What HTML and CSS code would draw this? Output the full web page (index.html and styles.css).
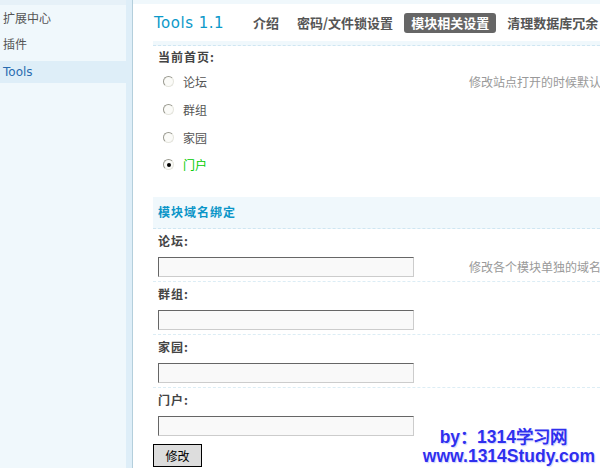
FILE: index.html
```html
<!DOCTYPE html>
<html lang="zh-CN">
<head>
<meta charset="utf-8">
<title>Tools 1.1</title>
<link rel="stylesheet" href="styles.css">
</head>
<body>
<div class="page">
  <aside class="sidebar">
    <div class="side-top"></div>
    <ul class="side-menu">
      <li class="side-item">扩展中心</li>
      <li class="side-item">插件</li>
      <li class="side-item side-item-active">Tools</li>
    </ul>
  </aside>
  <div class="side-edge"></div>
  <main class="content">
    <div class="content-top"></div>
    <header class="header">
      <h1 class="title">Tools 1.1</h1>
      <nav class="nav">
        <span class="nav-item">介绍</span>
        <span class="nav-item">密码/文件锁设置</span>
        <span class="nav-item nav-item-active">模块相关设置</span>
        <span class="nav-item">清理数据库冗余</span>
      </nav>
    </header>
    <div class="band"></div>

    <div class="form">
      <div class="label-row">当前首页:</div>
      <div class="radio-block">
        <div class="radio-list">
          <label class="radio-row"><input type="radio" name="home" class="radio"><span>论坛</span></label>
          <label class="radio-row"><input type="radio" name="home" class="radio"><span>群组</span></label>
          <label class="radio-row"><input type="radio" name="home" class="radio"><span>家园</span></label>
          <label class="radio-row"><input type="radio" name="home" class="radio" checked><span class="green">门户</span></label>
        </div>
        <div class="hint hint-radio">修改站点打开的时候默认首页</div>
      </div>

      <div class="section-head">模块域名绑定</div>

      <div class="group">
        <div class="label-row">论坛:</div>
        <div class="input-row">
          <input type="text" class="text-input">
          <span class="hint">修改各个模块单独的域名</span>
        </div>
      </div>
      <div class="group">
        <div class="label-row">群组:</div>
        <div class="input-row">
          <input type="text" class="text-input">
        </div>
      </div>
      <div class="group">
        <div class="label-row">家园:</div>
        <div class="input-row">
          <input type="text" class="text-input">
        </div>
      </div>
      <div class="group group-last">
        <div class="label-row">门户:</div>
        <div class="input-row">
          <input type="text" class="text-input">
        </div>
      </div>
      <button class="submit" type="button">修改</button>
    </div>
  </main>
</div>
<div class="watermark">
  <div class="wm-line1">by：1314学习网</div>
  <div class="wm-line2">www.1314Study.com</div>
</div>
</body>
</html>
```

FILE: styles.css
```css
html, body {
  margin: 0;
  padding: 0;
  background: #ffffff;
}
body {
  width: 600px;
  height: 468px;
  overflow: hidden;
  position: relative;
  font-family: "Noto Sans CJK SC", "DejaVu Sans", sans-serif;
  font-size: 12px;
  color: #555;
}
.page {
  display: flex;
  height: 468px;
}
.sidebar {
  width: 126px;
  flex: none;
  background: #f0f8fc;
}
.side-top {
  height: 5px;
  background: #e6f1f8;
}
.side-menu {
  list-style: none;
  margin: 0;
  padding: 0;
}
.side-item {
  height: 26px;
  line-height: 26px;
  padding-left: 3px;
  color: #555;
  font-size: 12px;
}
.side-item-active {
  margin-top: 4px;
  height: 22px;
  line-height: 22px;
  background: #deeef8;
  color: #2a6cb0;
  font-family: "DejaVu Sans", sans-serif;
  font-size: 12px;
}
.side-edge {
  width: 6px;
  flex: none;
  background: #deeef8;
  border-right: 1px solid #b4cfdc;
}
.content {
  flex: 1;
  min-width: 0;
}
.content-top {
  height: 4px;
  background: #f0f8fc;
}
.header {
  display: flex;
  align-items: center;
  height: 37px;
  padding-left: 21px;
  white-space: nowrap;
}
.title {
  margin: 0 22px 0 0;
  font-family: "DejaVu Sans", sans-serif;
  font-weight: normal;
  font-size: 15px;
  letter-spacing: 0.5px;
  color: #0c99c9;
}
.nav {
  display: flex;
  align-items: center;
}
.nav-item {
  padding: 0 7px;
  margin-right: 4px;
  height: 20px;
  line-height: 20px;
  font-size: 13px;
  font-weight: bold;
  color: #555;
  border-radius: 3px;
}
.nav-item-active {
  background: #666;
  color: #fff;
}
.band {
  margin-left: 20px;
  height: 4px;
  background: #f0f8fc;
  border-bottom: 1px dashed #cfe6f2;
}
.form {
  margin-left: 20px;
}
.label-row {
  height: 24px;
  line-height: 24px;
  padding-left: 5px;
  font-size: 12px;
  font-weight: bold;
  letter-spacing: 1px;
  color: #444;
}
.form > .label-row {
  height: 22px;
  line-height: 22px;
}
.radio-block {
  display: grid;
  grid-template-columns: 316px 1fr;
  align-items: start;
}
.radio-list {
  display: flex;
  flex-direction: column;
}
.radio-row {
  display: flex;
  align-items: center;
  height: 27.7px;
  padding-left: 10px;
  color: #555;
}
.radio {
  -webkit-appearance: none;
  appearance: none;
  width: 11px;
  height: 11px;
  margin: 0 9px 0 0;
  border-radius: 50%;
  border: 1px solid #9a9a90;
  border-right-color: #e4e4dc;
  border-bottom-color: #e4e4dc;
  background: #fbfbf8;
  position: relative;
}
.radio:checked::after {
  content: "";
  position: absolute;
  left: 3px;
  top: 3px;
  width: 4px;
  height: 4px;
  border-radius: 50%;
  background: #000;
}
.green {
  color: #00cc00;
}
.hint {
  color: #999;
  font-size: 12px;
  white-space: nowrap;
}
.hint-radio {
  height: 28px;
  line-height: 28px;
}
.section-head {
  margin-top: 18px;
  height: 31px;
  line-height: 30px;
  padding-left: 5px;
  background: #f0f8fc;
  border-bottom: 1px dashed #cfe6f2;
  color: #0a95c8;
  font-weight: bold;
  letter-spacing: 1px;
}
.group {
  border-bottom: 1px dashed #dcedf5;
}
.group-last {
  border-bottom: none;
}
.input-row {
  display: grid;
  grid-template-columns: 316px 1fr;
  align-items: center;
  padding: 4px 0 4px 5px;
}
.text-input {
  box-sizing: border-box;
  width: 256px;
  height: 20px;
  margin: 0;
  padding: 0 2px;
  border: 1px solid #ccc;
  border-top-color: #666;
  border-left-color: #666;
  background: #f9f9f9;
}
.input-row .hint {
  margin-left: -5px;
}
.submit {
  margin-top: 4px;
  width: 49px;
  height: 23px;
  padding: 0;
  border: 1px solid #000;
  background: #ddd;
  font-family: "Noto Sans CJK SC", sans-serif;
  font-size: 12px;
  color: #000;
}
.watermark {
  position: absolute;
  right: 5px;
  top: 428px;
  text-align: right;
  font-family: "Liberation Sans", Arial, sans-serif;
  font-weight: bold;
  color: #2f2fee;
  text-shadow: 0 0 2px #fff, 1px 1px 1px #c8c8ff;
}
.wm-line1 {
  font-size: 17.5px;
  line-height: 19px;
  padding-right: 28px;
}
.wm-line2 {
  font-size: 17.5px;
  line-height: 19px;
}
```
